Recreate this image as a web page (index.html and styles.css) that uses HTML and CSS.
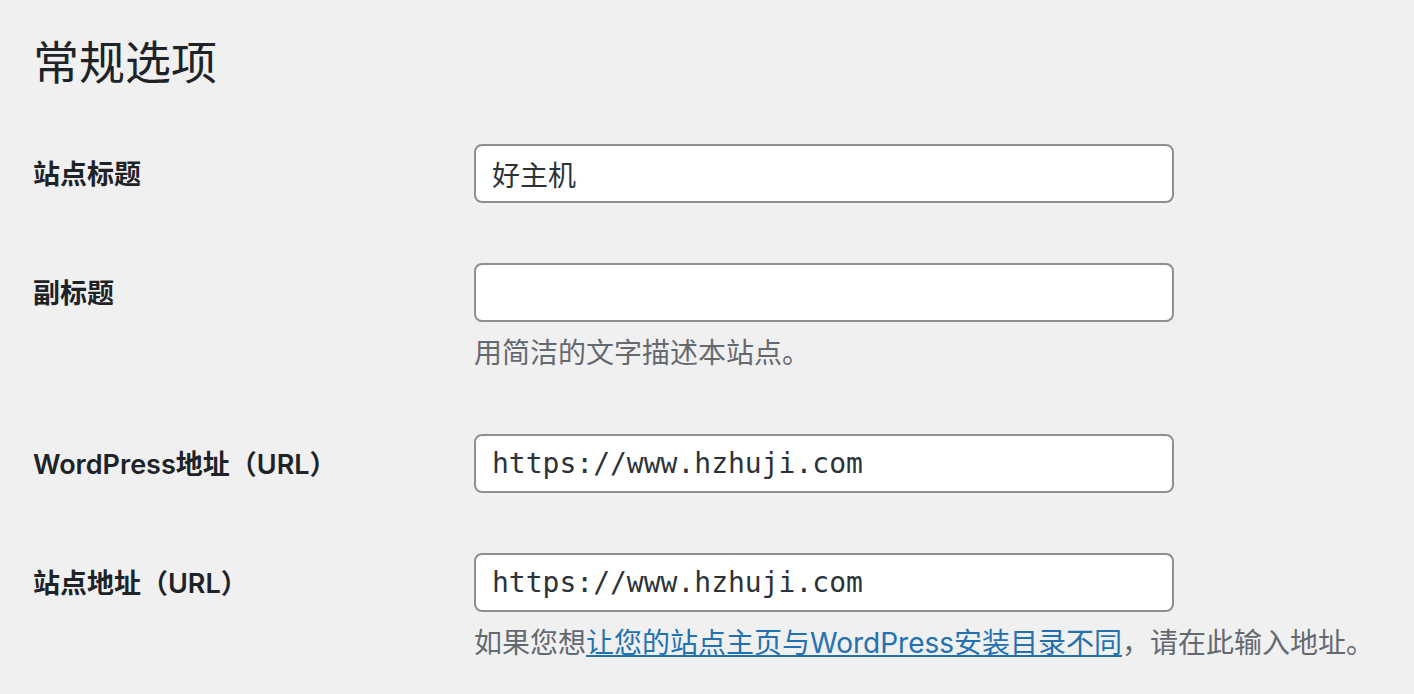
FILE: index.html
```html
<!doctype html>
<html lang="zh-CN">
<head>
<meta charset="UTF-8">
<title>常规选项</title>
<link rel="stylesheet" href="styles.css">
</head>
<body>
<div class="wrap">
  <h1>常规选项</h1>
  <form class="form-table" action="" method="post">
    <div class="row">
      <label class="label" for="blogname">站点标题</label>
      <div class="field">
        <input type="text" id="blogname" class="regular-text" value="好主机">
      </div>
    </div>
    <div class="row">
      <label class="label" for="blogdescription">副标题</label>
      <div class="field">
        <input type="text" id="blogdescription" class="regular-text" value="">
        <p class="description">用简洁的文字描述本站点。</p>
      </div>
    </div>
    <div class="row">
      <label class="label" for="siteurl">WordPress地址（URL）</label>
      <div class="field">
        <input type="url" id="siteurl" class="regular-text code" value="https://www.hzhuji.com">
      </div>
    </div>
    <div class="row">
      <label class="label" for="home">站点地址（URL）</label>
      <div class="field">
        <input type="url" id="home" class="regular-text code" value="https://www.hzhuji.com">
        <p class="description">如果您想<a href="#">让您的站点主页与WordPress安装目录不同</a>，请在此输入地址。</p>
      </div>
    </div>
  </form>
</div>
</body>
</html>
```

FILE: styles.css
```css
body {
	margin: 0;
	padding: 0;
	background-color: #f0f0f1;
	color: #1d2327;
	font-family: Inter, "Noto Sans CJK SC", sans-serif;
	font-size: 28px;
}
.wrap {
	padding: 29px 33px 0;
}
h1 {
	margin: 0 0 25px;
	font-size: 46px;
	font-weight: 400;
	line-height: 60px;
	font-family: "Noto Sans CJK SC", sans-serif;
}
.form-table .row {
	display: grid;
	grid-template-columns: 441px 1fr;
	padding: 30px 0;
}
.form-table .label {
	padding-top: 43px;
	margin-top: -30px;
	font-weight: 600;
	line-height: 36px;
	font-size: 27px;
}
.regular-text {
	box-sizing: border-box;
	width: 700px;
	height: 59px;
	margin: 0;
	padding: 0 16px;
	border: 2px solid #8c8f94;
	border-radius: 8px;
	background: #fff;
	color: #2c3338;
	font-family: Inter, "Noto Sans CJK SC", sans-serif;
	font-size: 28px;
	outline: none;
}
.regular-text.code {
	font-family: "DejaVu Sans Mono", monospace;
	font-size: 28px;
}
.description {
	margin: 10px 0 0;
	color: #646970;
	font-size: 28px;
	line-height: 42px;
}
.description a {
	color: #2271b1;
	text-decoration: underline;
}
```
